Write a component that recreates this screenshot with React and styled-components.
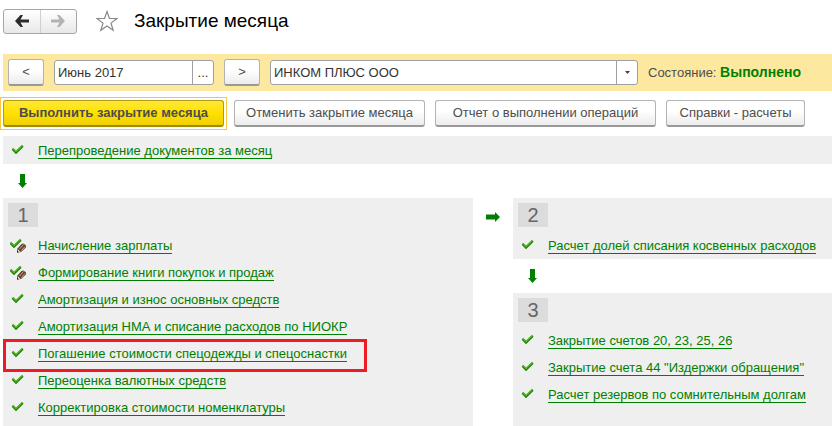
import React from "react";
import styled, { createGlobalStyle, css } from "styled-components";

const GlobalStyle = createGlobalStyle`
  *, *::before, *::after { box-sizing: border-box; }
  body {
    margin: 0;
    background: #fff;
    color: #4d4d4d;
    font: 13px/16px "Liberation Sans", Arial, sans-serif;
  }
  button, input, select { font: inherit; color: inherit; }
`;

const Page = styled.main`
  display: flex;
  flex-direction: column;
  padding: 8px 0 0 3px;
`;

const Header = styled.header`
  display: flex;
  align-items: center;
  height: 26px;
`;

const History = styled.nav`
  display: flex;
  width: 74px;
  height: 25px;
  border: 1px solid #a6a6a6;
  border-radius: 3px;
  background: linear-gradient(#fff, #e8e8e8);
`;

const HistoryButton = styled.button`
  flex: 1;
  display: grid;
  place-items: center;
  padding: 0;
  border: 0;
  background: none;
  color: ${(p) => (p.disabled ? "#b3b3b3" : "#2b2b2b")};
  & + & { border-left: 1px solid #d0d0d0; }
`;

const StarButton = styled.button`
  display: grid;
  margin: 0 16px 0 19px;
  padding: 0;
  border: 0;
  background: none;
`;

const Title = styled.h1`
  margin: 0;
  color: #000;
  font-size: 19px;
  font-weight: 400;
  line-height: 24px;
`;

const FilterBar = styled.section`
  display: flex;
  align-items: center;
  gap: 10px;
  height: 37px;
  margin-top: 20px;
  padding: 0 5px;
  background: #fce99f;
`;

const Button = styled.button`
  position: relative;
  height: 27px;
  min-width: ${(p) => p.$width || 36}px;
  padding: 0 10px;
  border: 1px solid #b3b3b3;
  border-bottom: 2px solid #999;
  border-radius: 3px;
  background: linear-gradient(#fff 40%, #ececec);
  white-space: nowrap;
  ${(p) => p.$primary && css`
    border-color: #b39b10;
    border-bottom-color: #a08800;
    background: linear-gradient(#ffe838, #ffe100 50%, #efd000);
    font-weight: 700;
    &::after {
      content: "";
      position: absolute;
      inset: -4px -4px -5px;
      border: 1px solid #f8c93a;
      pointer-events: none;
    }
  `}
`;

const Field = styled.div`
  display: flex;
  position: relative;
  height: 25px;
  width: ${(p) => (p.$grow ? "auto" : "160px")};
  flex: ${(p) => (p.$grow ? "0 1 368px" : "none")};
  border: 1px solid #a0a0a0;
  border-radius: 3px;
  background: #fff;
  color: #333;
`;

const TextInput = styled.input`
  flex: 1;
  min-width: 0;
  padding: 0 3px;
  border: 0;
  background: none;
`;

const MoreButton = styled.button`
  width: 21px;
  padding: 0;
  border: 0;
  border-left: 1px solid #a0a0a0;
  background: none;
`;

const Select = styled.select`
  appearance: none;
  width: 100%;
  padding: 0 24px 0 3px;
  border: 0;
  background: none;
`;

const SelectMarker = styled.span`
  position: absolute;
  inset: 0 0 0 auto;
  display: grid;
  place-items: center;
  width: 21px;
  border-left: 1px solid #a0a0a0;
  pointer-events: none;
`;

const Status = styled.p`
  margin: 0;
  white-space: nowrap;
`;

const StatusValue = styled.strong`
  color: #008000;
  font-size: 14px;
`;

const Actions = styled.div`
  display: flex;
  gap: 10px;
  margin: 9px 0;
`;

const Panel = styled.section`
  min-height: 28px;
  padding: ${(p) => (p.$plain ? "1px 0 0" : "5px 0 0")};
  background: #efefef;
`;

const Arrow = styled.svg`
  display: block;
  fill: #008000;
`;

const DownFlow = styled.div`
  height: 34px;
  padding: 10px 15px;
`;

const SideFlow = styled.div`
  padding: 14px 13px;
`;

const Stages = styled.div`
  display: grid;
  grid-template-columns: 470fr 40px 319fr;
`;

const Column = styled.div`
  display: flex;
  flex-direction: column;
  & > section:last-child { flex: 1; padding-bottom: 5px; }
`;

const StageNumber = styled.h2`
  width: 30px;
  margin: 0 0 5px 5px;
  background: #dcdcdc;
  color: #666;
  font-size: 20px;
  font-weight: 400;
  line-height: 24px;
  text-align: center;
`;

const List = styled.ul`
  margin: 0;
  padding: 0;
  list-style: none;
`;

const Row = styled.li`
  position: relative;
  display: flex;
  align-items: center;
  height: 27px;
  ${(p) => p.$marked && css`
    &::after {
      content: "";
      position: absolute;
      z-index: 1;
      inset: -1px auto auto 0;
      width: 364px;
      height: 33px;
      border: 3px solid #ed1c24;
      pointer-events: none;
    }
  `}
`;

const State = styled.span`
  display: flex;
  width: 35px;
  padding-left: 7px;
`;

const Link = styled.a`
  border-bottom: 1px solid #008000;
  color: #008000;
  line-height: 15px;
  text-decoration: none;
  white-space: nowrap;
`;

function HistoryArrow({ flip }) {
  return (
    <svg width="14" height="12" viewBox="0 0 14 12" fill="currentColor" aria-hidden="true">
      <path
        d={
          flip
            ? "M0 4.500h8.500L6 0h2.500L14 6 8.500 12H6l2.500-4.500H0z"
            : "M14 4.500H5.500L8 0H5.500L0 6l5.500 6H8L5.500 7.500H14z"
        }
      />
    </svg>
  );
}

function StateIcon({ edited }) {
  return (
    <svg width="18" height="18" viewBox="0 0 18 18" aria-hidden="true">
      <g transform={edited ? "translate(-2 -1)" : undefined}>
        <path d="M2.500 7 6 10.500 12.800 4" fill="none" stroke="#267d12" strokeWidth="2.400" />
        <path d="M2.700 6.300 6 9.500 12.500 3.300" fill="none" stroke="#4fb91e" strokeWidth="1.400" />
      </g>
      {edited && (
        <g>
          <path d="M7 15.500V12l4.500-5 2-.5 2.500 2v2L11 15z" fill="#60442f" />
          <path d="m9.500 12 4-4.500M11.500 13.500l3.500-4" stroke="#c9ad8c" strokeWidth="1" />
          <path d="m7.500 11.800 3 3L8 15.200z" fill="#e8d8bf" />
          <path d="M7 15.500v-2l2 1.700z" fill="#222" />
        </g>
      )}
    </svg>
  );
}

function DownArrow() {
  return (
    <DownFlow>
      <Arrow width="9" height="14" viewBox="0 0 9 14" aria-hidden="true">
        <path d="M2 0h5v9h2l-4.500 5L0 9h2z" />
      </Arrow>
    </DownFlow>
  );
}

function Operations({ items }) {
  return (
    <List>
      {items.map(({ name, edited, marked }) => (
        <Row key={name} $marked={marked}>
          <State><StateIcon edited={edited} /></State>
          <Link href="#">{name}</Link>
        </Row>
      ))}
    </List>
  );
}

function Stage({ number, items }) {
  return (
    <Panel>
      <StageNumber>{number}</StageNumber>
      <Operations items={items} />
    </Panel>
  );
}

const preparation = [{ name: "Перепроведение документов за месяц" }];

const firstStage = [
  { name: "Начисление зарплаты", edited: true },
  { name: "Формирование книги покупок и продаж", edited: true },
  { name: "Амортизация и износ основных средств" },
  { name: "Амортизация НМА и списание расходов по НИОКР" },
  { name: "Погашение стоимости спецодежды и спецоснастки", marked: true },
  { name: "Переоценка валютных средств" },
  { name: "Корректировка стоимости номенклатуры" },
];

const secondStage = [{ name: "Расчет долей списания косвенных расходов" }];

const thirdStage = [
  { name: "Закрытие счетов 20, 23, 25, 26" },
  { name: "Закрытие счета 44 \"Издержки обращения\"" },
  { name: "Расчет резервов по сомнительным долгам" },
];

export default function App() {
  return (
    <>
      <GlobalStyle />
      <Page>
        <Header>
          <History aria-label="История">
            <HistoryButton aria-label="Назад"><HistoryArrow /></HistoryButton>
            <HistoryButton aria-label="Вперед" disabled><HistoryArrow flip /></HistoryButton>
          </History>
          <StarButton aria-label="В избранное">
            <svg width="22" height="22" viewBox="0 0 22 22" fill="none" stroke="#888" strokeWidth="1.200" aria-hidden="true">
              <path d="m11 1.500 2.500 7H21l-6 4.600 2.200 7.200L11 15.900l-6.200 4.400L7 13.100 1 8.500h7.500z" />
            </svg>
          </StarButton>
          <Title>Закрытие месяца</Title>
        </Header>

        <FilterBar>
          <Button aria-label="Предыдущий месяц">&lt;</Button>
          <Field>
            <TextInput aria-label="Период" defaultValue="Июнь 2017" />
            <MoreButton aria-label="Выбрать период">...</MoreButton>
          </Field>
          <Button aria-label="Следующий месяц">&gt;</Button>
          <Field $grow>
            <Select aria-label="Организация">
              <option>ИНКОМ ПЛЮС ООО</option>
            </Select>
            <SelectMarker>
              <svg width="5" height="3" viewBox="0 0 5 3" aria-hidden="true"><path d="M0 0h5L2.500 3z" fill="#444" /></svg>
            </SelectMarker>
          </Field>
          <Status>Состояние: <StatusValue>Выполнено</StatusValue></Status>
        </FilterBar>

        <Actions>
          <Button $primary $width={221}>Выполнить закрытие месяца</Button>
          <Button $width={191}>Отменить закрытие месяца</Button>
          <Button $width={221}>Отчет о выполнении операций</Button>
          <Button $width={139}>Справки - расчеты</Button>
        </Actions>

        <Panel $plain><Operations items={preparation} /></Panel>
        <DownArrow />
        <Stages>
          <Column><Stage number={1} items={firstStage} /></Column>
          <SideFlow>
            <Arrow width="14" height="10" viewBox="0 0 14 10" aria-hidden="true">
              <path d="M0 2.500h9V0l5 5-5 5V7.500H0z" />
            </Arrow>
          </SideFlow>
          <Column>
            <Stage number={2} items={secondStage} />
            <DownArrow />
            <Stage number={3} items={thirdStage} />
          </Column>
        </Stages>
      </Page>
    </>
  );
}
